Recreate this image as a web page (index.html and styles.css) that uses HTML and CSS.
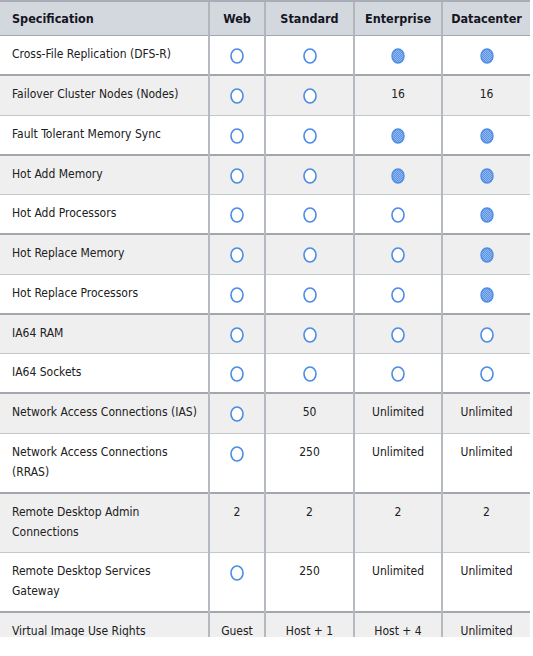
FILE: index.html
```html
<!DOCTYPE html>
<html>
<head>
<meta charset="utf-8">
<link rel="stylesheet" href="styles.css">
</head>
<body>
<svg class="defs" width="0" height="0" aria-hidden="true">
  <defs>
    <pattern id="dither" width="2" height="2" patternUnits="userSpaceOnUse">
      <rect width="2" height="2" fill="#8fb6ee"/>
      <rect width="1" height="1" fill="#5d94e4"/>
      <rect x="1" y="1" width="1" height="1" fill="#5d94e4"/>
    </pattern>
  </defs>
</svg>
<div class="frame">
<table class="spec">
  <colgroup>
    <col class="c-spec"><col class="c-web"><col class="c-std"><col class="c-ent"><col class="c-dc">
  </colgroup>
  <thead>
    <tr><th class="name">Specification</th><th>Web</th><th>Standard</th><th>Enterprise</th><th>Datacenter</th></tr>
  </thead>
  <tbody>
    <tr>
      <td class="name">Cross-File Replication (DFS-R)</td>
      <td><svg class="dot" viewBox="0 0 14 16"><ellipse cx="7" cy="8" rx="6" ry="7" class="open"/></svg></td>
      <td><svg class="dot" viewBox="0 0 14 16"><ellipse cx="7" cy="8" rx="6" ry="7" class="open"/></svg></td>
      <td><svg class="dot" viewBox="0 0 14 16"><ellipse cx="7" cy="8" rx="6" ry="7" class="full"/></svg></td>
      <td><svg class="dot" viewBox="0 0 14 16"><ellipse cx="7" cy="8" rx="6" ry="7" class="full"/></svg></td>
    </tr>
    <tr class="alt">
      <td class="name">Failover Cluster Nodes (Nodes)</td>
      <td><svg class="dot" viewBox="0 0 14 16"><ellipse cx="7" cy="8" rx="6" ry="7" class="open"/></svg></td>
      <td><svg class="dot" viewBox="0 0 14 16"><ellipse cx="7" cy="8" rx="6" ry="7" class="open"/></svg></td>
      <td>16</td>
      <td>16</td>
    </tr>
    <tr>
      <td class="name">Fault Tolerant Memory Sync</td>
      <td><svg class="dot" viewBox="0 0 14 16"><ellipse cx="7" cy="8" rx="6" ry="7" class="open"/></svg></td>
      <td><svg class="dot" viewBox="0 0 14 16"><ellipse cx="7" cy="8" rx="6" ry="7" class="open"/></svg></td>
      <td><svg class="dot" viewBox="0 0 14 16"><ellipse cx="7" cy="8" rx="6" ry="7" class="full"/></svg></td>
      <td><svg class="dot" viewBox="0 0 14 16"><ellipse cx="7" cy="8" rx="6" ry="7" class="full"/></svg></td>
    </tr>
    <tr class="alt">
      <td class="name">Hot Add Memory</td>
      <td><svg class="dot" viewBox="0 0 14 16"><ellipse cx="7" cy="8" rx="6" ry="7" class="open"/></svg></td>
      <td><svg class="dot" viewBox="0 0 14 16"><ellipse cx="7" cy="8" rx="6" ry="7" class="open"/></svg></td>
      <td><svg class="dot" viewBox="0 0 14 16"><ellipse cx="7" cy="8" rx="6" ry="7" class="full"/></svg></td>
      <td><svg class="dot" viewBox="0 0 14 16"><ellipse cx="7" cy="8" rx="6" ry="7" class="full"/></svg></td>
    </tr>
    <tr>
      <td class="name">Hot Add Processors</td>
      <td><svg class="dot" viewBox="0 0 14 16"><ellipse cx="7" cy="8" rx="6" ry="7" class="open"/></svg></td>
      <td><svg class="dot" viewBox="0 0 14 16"><ellipse cx="7" cy="8" rx="6" ry="7" class="open"/></svg></td>
      <td><svg class="dot" viewBox="0 0 14 16"><ellipse cx="7" cy="8" rx="6" ry="7" class="open"/></svg></td>
      <td><svg class="dot" viewBox="0 0 14 16"><ellipse cx="7" cy="8" rx="6" ry="7" class="full"/></svg></td>
    </tr>
    <tr class="alt">
      <td class="name">Hot Replace Memory</td>
      <td><svg class="dot" viewBox="0 0 14 16"><ellipse cx="7" cy="8" rx="6" ry="7" class="open"/></svg></td>
      <td><svg class="dot" viewBox="0 0 14 16"><ellipse cx="7" cy="8" rx="6" ry="7" class="open"/></svg></td>
      <td><svg class="dot" viewBox="0 0 14 16"><ellipse cx="7" cy="8" rx="6" ry="7" class="open"/></svg></td>
      <td><svg class="dot" viewBox="0 0 14 16"><ellipse cx="7" cy="8" rx="6" ry="7" class="full"/></svg></td>
    </tr>
    <tr>
      <td class="name">Hot Replace Processors</td>
      <td><svg class="dot" viewBox="0 0 14 16"><ellipse cx="7" cy="8" rx="6" ry="7" class="open"/></svg></td>
      <td><svg class="dot" viewBox="0 0 14 16"><ellipse cx="7" cy="8" rx="6" ry="7" class="open"/></svg></td>
      <td><svg class="dot" viewBox="0 0 14 16"><ellipse cx="7" cy="8" rx="6" ry="7" class="open"/></svg></td>
      <td><svg class="dot" viewBox="0 0 14 16"><ellipse cx="7" cy="8" rx="6" ry="7" class="full"/></svg></td>
    </tr>
    <tr class="alt">
      <td class="name">IA64 RAM</td>
      <td><svg class="dot" viewBox="0 0 14 16"><ellipse cx="7" cy="8" rx="6" ry="7" class="open"/></svg></td>
      <td><svg class="dot" viewBox="0 0 14 16"><ellipse cx="7" cy="8" rx="6" ry="7" class="open"/></svg></td>
      <td><svg class="dot" viewBox="0 0 14 16"><ellipse cx="7" cy="8" rx="6" ry="7" class="open"/></svg></td>
      <td><svg class="dot" viewBox="0 0 14 16"><ellipse cx="7" cy="8" rx="6" ry="7" class="open"/></svg></td>
    </tr>
    <tr>
      <td class="name">IA64 Sockets</td>
      <td><svg class="dot" viewBox="0 0 14 16"><ellipse cx="7" cy="8" rx="6" ry="7" class="open"/></svg></td>
      <td><svg class="dot" viewBox="0 0 14 16"><ellipse cx="7" cy="8" rx="6" ry="7" class="open"/></svg></td>
      <td><svg class="dot" viewBox="0 0 14 16"><ellipse cx="7" cy="8" rx="6" ry="7" class="open"/></svg></td>
      <td><svg class="dot" viewBox="0 0 14 16"><ellipse cx="7" cy="8" rx="6" ry="7" class="open"/></svg></td>
    </tr>
    <tr class="alt">
      <td class="name">Network Access Connections (IAS)</td>
      <td><svg class="dot" viewBox="0 0 14 16"><ellipse cx="7" cy="8" rx="6" ry="7" class="open"/></svg></td>
      <td>50</td>
      <td>Unlimited</td>
      <td>Unlimited</td>
    </tr>
    <tr>
      <td class="name">Network Access Connections (RRAS)</td>
      <td><svg class="dot" viewBox="0 0 14 16"><ellipse cx="7" cy="8" rx="6" ry="7" class="open"/></svg></td>
      <td>250</td>
      <td>Unlimited</td>
      <td>Unlimited</td>
    </tr>
    <tr class="alt">
      <td class="name">Remote Desktop Admin Connections</td>
      <td>2</td>
      <td>2</td>
      <td>2</td>
      <td>2</td>
    </tr>
    <tr>
      <td class="name">Remote Desktop Services Gateway</td>
      <td><svg class="dot" viewBox="0 0 14 16"><ellipse cx="7" cy="8" rx="6" ry="7" class="open"/></svg></td>
      <td>250</td>
      <td>Unlimited</td>
      <td>Unlimited</td>
    </tr>
    <tr class="alt">
      <td class="name">Virtual Image Use Rights</td>
      <td>Guest</td>
      <td>Host + 1</td>
      <td>Host + 4</td>
      <td>Unlimited</td>
    </tr>
  </tbody>
</table>
</div>
</body>
</html>
```
FILE: styles.css
```css
html, body {
  margin: 0;
  padding: 0;
  background: #ffffff;
}

.defs {
  position: absolute;
  width: 0;
  height: 0;
}

.frame {
  width: 530px;
  height: 637px;
  overflow: hidden;
}

.spec {
  width: 530px;
  table-layout: fixed;
  border-collapse: collapse;
  font-family: "DejaVu Sans Condensed", "Liberation Sans", sans-serif;
  font-size: 12px;
  color: #202020;
}

.c-spec { width: 209px; }
.c-web { width: 56px; }
.c-std { width: 89px; }
.c-ent { width: 88px; }
.c-dc { width: 88px; }

.spec th {
  height: 33px;
  padding: 0 6px;
  background: #d3d8df;
  border-top: 2px solid #a9aeb6;
  border-bottom: 1px solid #a3a8b0;
  border-left: 2px solid #b1b5bc;
  font-weight: bold;
  font-size: 12.5px;
  color: #15151f;
  text-align: center;
  vertical-align: middle;
}

.spec th:first-child {
  border-left: none;
}

.spec td {
  padding: 8px 6px 10px;
  line-height: 20px;
  text-align: center;
  vertical-align: top;
  border-top: 1px solid #c4c7cc;
  border-left: 2px solid #b5b9c0;
}

.spec td:first-child {
  border-left: none;
}

.spec th.name,
.spec td.name {
  text-align: left;
  padding-left: 12px;
  padding-right: 8px;
}

.spec tr.alt td {
  background: #efefef;
  border-top: 2px solid #a2a6ad;
  padding-bottom: 10.5px;
}

.dot {
  display: inline-block;
  width: 14px;
  height: 16px;
  vertical-align: -6px;
}

.dot .open {
  fill: #ffffff;
  stroke: #4a8be4;
  stroke-width: 1.6;
}

.dot .full {
  fill: url(#dither);
  stroke: #4d8ce3;
  stroke-width: 1.4;
}
```
